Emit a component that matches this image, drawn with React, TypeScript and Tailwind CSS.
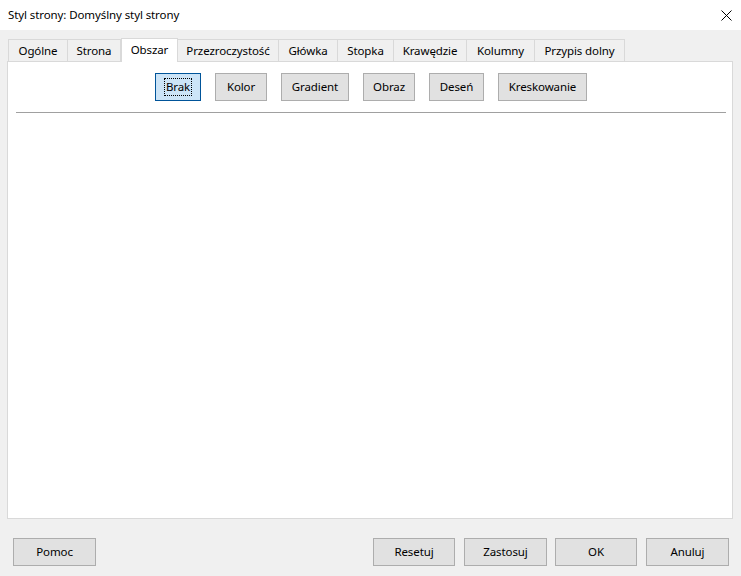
import React from 'react';

const tabs = [
    { label: 'Ogólne', w: 60 },
    { label: 'Strona', w: 53 },
    { label: 'Obszar', w: 57, active: true },
    { label: 'Przezroczystość', w: 101 },
    { label: 'Główka', w: 59 },
    { label: 'Stopka', w: 56 },
    { label: 'Krawędzie', w: 73 },
    { label: 'Kolumny', w: 68 },
    { label: 'Przypis dolny', w: 90 },
];

const fillButtons = [
    { label: 'Brak', w: 46, active: true },
    { label: 'Kolor', w: 52 },
    { label: 'Gradient', w: 68 },
    { label: 'Obraz', w: 52 },
    { label: 'Deseń', w: 55 },
    { label: 'Kreskowanie', w: 89 },
];

function DialogButton({ label, className = '' }: { label: string; className?: string }) {
    return (
        <button
            className={`h-[28px] border border-[#adadad] bg-[#e1e1e1] text-black ${className}`}
        >
            {label}
        </button>
    );
}

export default function App() {
    return (
        <div
            className="w-[741px] h-[576px] bg-[#f0f0f0] flex flex-col text-[11.5px] tracking-[-0.1px] text-black overflow-hidden"
            style={{ fontFamily: '"Noto Sans", "Open Sans", sans-serif' }}
        >
            {/* Title bar */}
            <div className="h-[30px] bg-white flex items-center justify-between pl-[8px] pr-[9px] shrink-0">
                <span className="leading-none">Styl strony: Domyślny styl strony</span>
                <svg width="11" height="11" viewBox="0 0 11 11">
                    <path d="M0.5 0.5 L10.5 10.5 M10.5 0.5 L0.5 10.5" stroke="#000" strokeWidth="1" />
                </svg>
            </div>

            {/* Tabs */}
            <div className="flex items-end pl-[8px] pt-[7px] h-[31px] shrink-0">
                {tabs.map((t, i) =>
                    t.active ? (
                        <div
                            key={i}
                            className="relative z-10 h-[24px] -mb-[1px] bg-white border border-b-0 border-[#d9d9d9] flex items-center justify-center leading-none pb-[2px]"
                            style={{ width: t.w }}
                        >
                            {t.label}
                        </div>
                    ) : (
                        <div
                            key={i}
                            className={`h-[22px] bg-[#f0f0f0] border-t border-r border-[#d9d9d9] flex items-center justify-center leading-none ${i === 0 ? 'border-l' : ''}`}
                            style={{ width: t.w }}
                        >
                            {t.label}
                        </div>
                    )
                )}
            </div>

            {/* Panel */}
            <div className="ml-[7px] w-[726px] h-[458px] bg-white border border-[#d9d9d9] flex flex-col shrink-0">
                <div className="flex justify-center gap-[14px] pt-[11px] pl-[2px]">
                    {fillButtons.map((b, i) =>
                        b.active ? (
                            <button
                                key={i}
                                className="h-[28px] border border-[#005499] bg-[#cce4f7] flex items-center justify-center"
                                style={{ width: b.w }}
                            >
                                <span className="outline outline-1 outline-dotted outline-black px-[1px] leading-[16px]">
                                    {b.label}
                                </span>
                            </button>
                        ) : (
                            <button
                                key={i}
                                className="h-[28px] border border-[#adadad] bg-[#e1e1e1]"
                                style={{ width: b.w }}
                            >
                                {b.label}
                            </button>
                        )
                    )}
                </div>
                <div className="mt-[11px] ml-[8px] mr-[6px] h-[1px] bg-[#a0a0a0]" />
            </div>

            {/* Bottom buttons */}
            <div className="flex items-center pt-[19px] pl-[13px] pr-[12px]">
                <DialogButton label="Pomoc" className="w-[83px]" />
                <div className="flex-1" />
                <div className="flex">
                    <DialogButton label="Resetuj" className="w-[82px]" />
                    <DialogButton label="Zastosuj" className="w-[83px] ml-[9px]" />
                    <DialogButton label="OK" className="w-[82px] ml-[8px]" />
                    <DialogButton label="Anuluj" className="w-[83px] ml-[9px]" />
                </div>
            </div>
        </div>
    );
}
